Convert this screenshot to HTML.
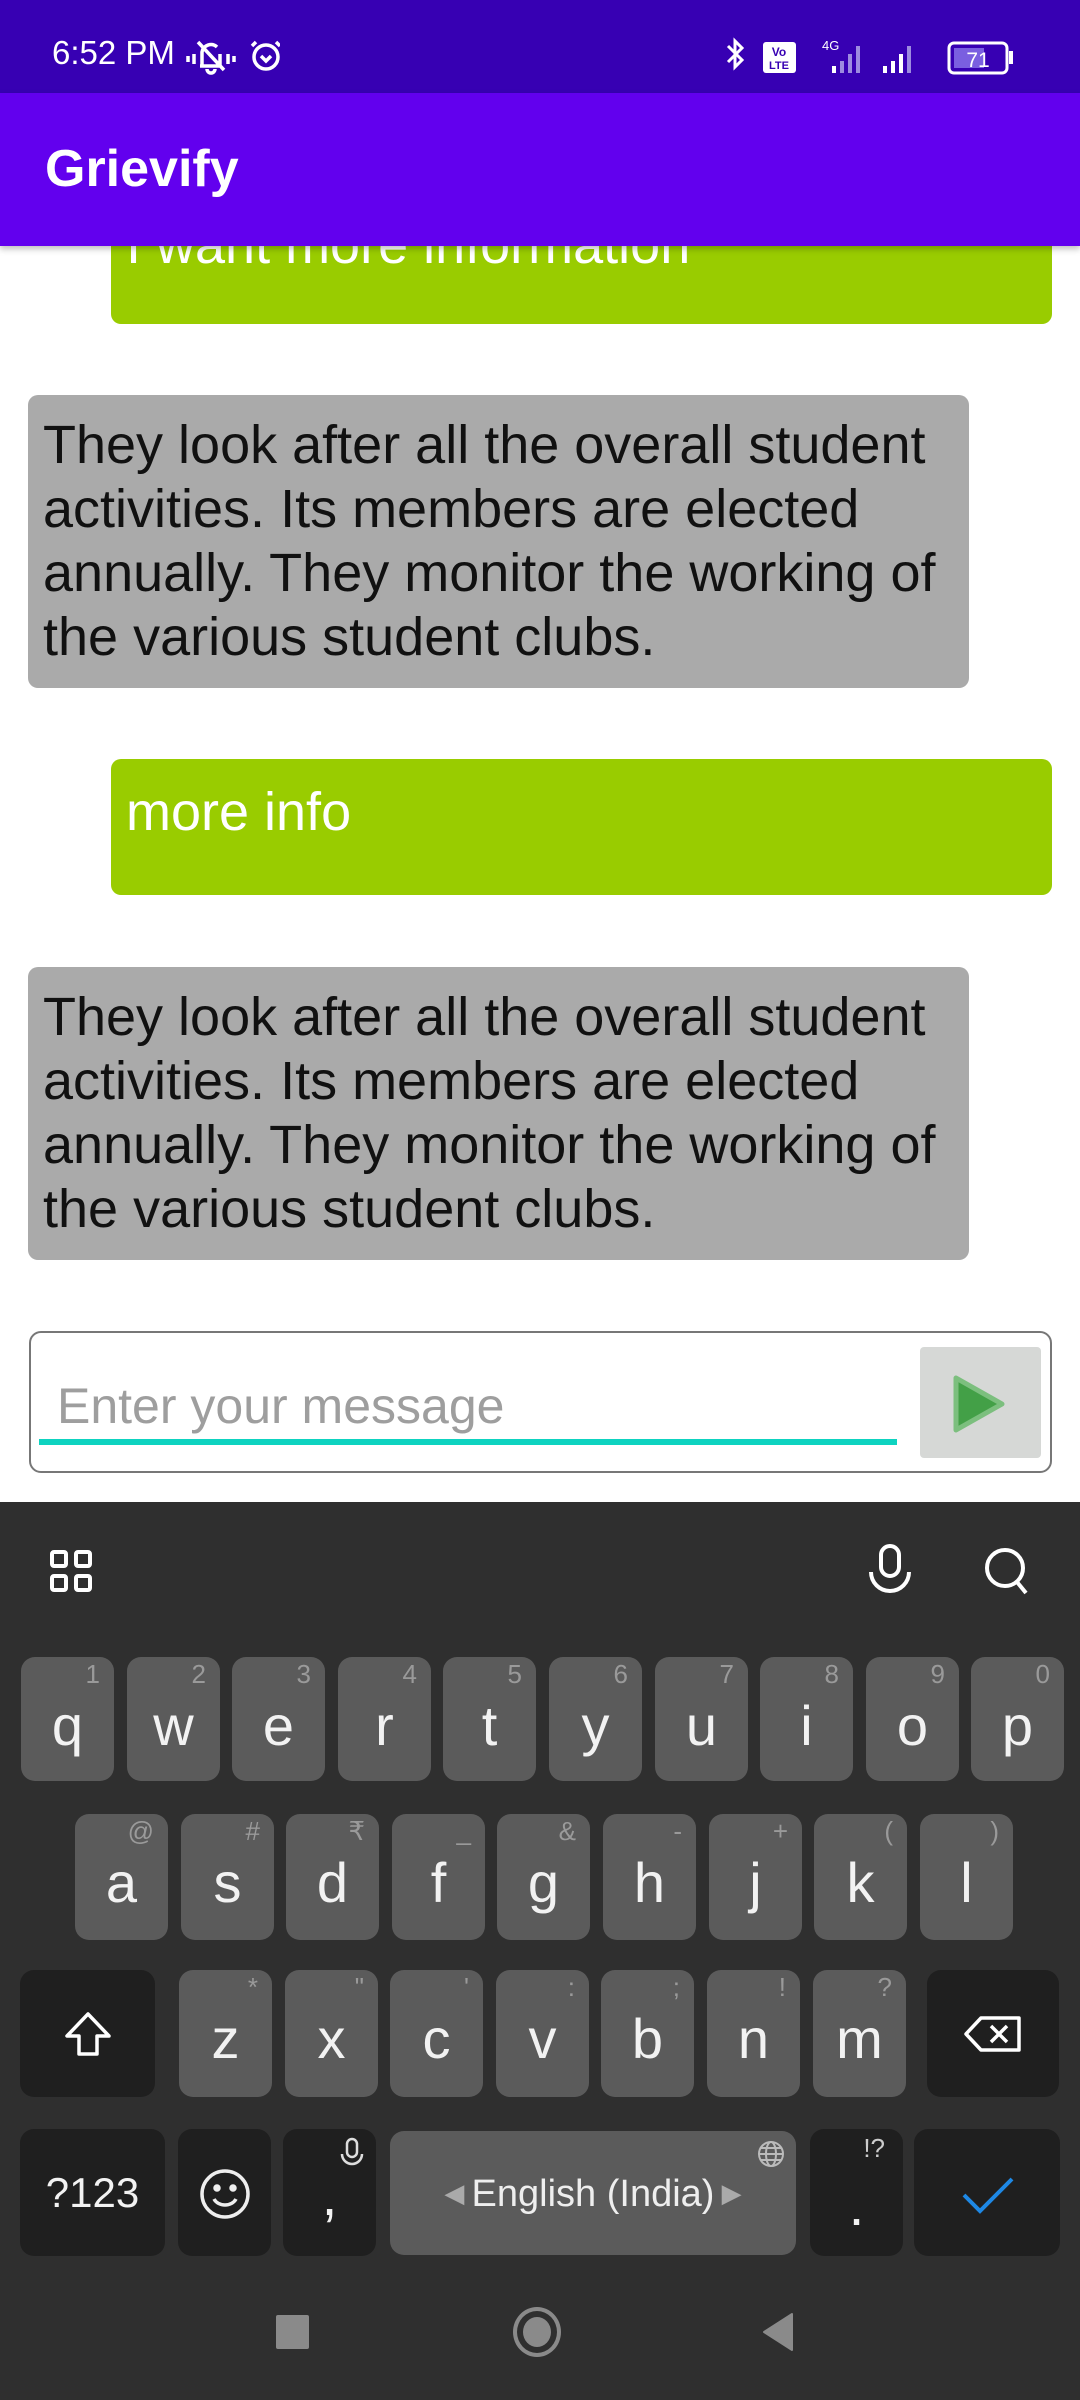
<!DOCTYPE html>
<html><head><meta charset="utf-8"><style>
*{margin:0;padding:0;box-sizing:border-box}
body{width:1080px;height:2400px;position:relative;overflow:hidden;background:#fff;font-family:"Liberation Sans",sans-serif}
.a{position:absolute}
.sb{left:0;top:0;width:1080px;height:93px;background:#3700B3;z-index:5}
.ab{left:0;top:93px;width:1080px;height:153px;background:#6200EE;z-index:5;box-shadow:0 3px 6px rgba(0,0,0,.25)}
.g{background:#99CC00;border-radius:10px;color:#fff;font-size:54px}
.gr{background:#AAAAAA;border-radius:10px;color:#111;font-size:54px;line-height:64px;padding:18px 0 0 15px;white-space:nowrap}
.kb{left:0;top:1502px;width:1080px;height:898px;background:#2F2F2F}
.k{position:absolute;background:#5B5B5B;border-radius:14px;color:#f2f2f2;font-size:56px;text-align:center}
.k span{position:absolute;left:0;right:0;top:36px}
.k i{position:absolute;right:14px;top:2px;font-style:normal;font-size:26px;color:#9a9a9a}
.d{background:#1F1F1F}
</style></head><body>
<div class="a sb">
<div class="a" style="left:52px;top:34px;color:#fff;font-size:33px">6:52 PM</div>
<svg class="a" style="left:184px;top:36px" width="96" height="40" viewBox="0 0 96 40" fill="none" stroke="#fff" stroke-width="3.5"><path d="M10 18v10M4 20v6M44 18v10M50 20v6"/><path d="M18 30V16a9 9 0 0 1 15-5M36 18v12H16M14 6l26 28"/><path d="M23 33a4 4 0 0 0 8 0"/><circle cx="82" cy="21" r="12"/><path d="M72 6l-4 4M92 6l4 4M77 20l5 5 5-5"/></svg>
<svg class="a" style="left:722px;top:36px" width="300" height="40" viewBox="0 0 300 40"><path d="M6 10l14 14-7 7V5l7 7-14 14" fill="none" stroke="#fff" stroke-width="3"/><rect x="41" y="6" width="33" height="31" rx="3" fill="#fff"/><text x="57" y="20" font-size="12" text-anchor="middle" fill="#3700B3" font-weight="bold" font-family="Liberation Sans">Vo</text><text x="57" y="33" font-size="11" text-anchor="middle" fill="#3700B3" font-weight="bold" font-family="Liberation Sans">LTE</text><text x="100" y="14" font-size="13" fill="#fff" font-family="Liberation Sans">4G</text><rect x="110" y="30" width="4" height="7" fill="#fff"/><rect x="118" y="25" width="4" height="12" fill="#9d8be0"/><rect x="126" y="18" width="4" height="19" fill="#9d8be0"/><rect x="134" y="10" width="4" height="27" fill="#9d8be0"/><rect x="161" y="30" width="4" height="7" fill="#fff"/><rect x="169" y="25" width="4" height="12" fill="#fff"/><rect x="177" y="18" width="4" height="19" fill="#fff"/><rect x="185" y="10" width="4" height="27" fill="#9d8be0"/><rect x="227" y="7" width="58" height="30" rx="5" fill="none" stroke="#fff" stroke-width="3"/><rect x="232" y="12" width="30" height="20" fill="#7a5fe0"/><rect x="287" y="15" width="4" height="13" fill="#fff"/><text x="256" y="31" font-size="21" text-anchor="middle" fill="#fff" font-family="Liberation Sans">71</text></svg>
</div>
<div class="a ab"><div class="a" style="left:45px;top:46px;color:#fff;font-size:52px;font-weight:bold">Grievify</div></div>

<div class="a g" style="left:111px;top:170px;width:941px;height:154px"><div class="a" style="left:15px;top:44px">I want more information</div></div>
<div class="a gr" style="left:28px;top:395px;width:941px;height:293px">They look after all the overall student<br>activities. Its members are elected<br>annually. They monitor the working of<br>the various student clubs.</div>
<div class="a g" style="left:111px;top:759px;width:941px;height:136px"><div class="a" style="left:15px;top:22px">more info</div></div>
<div class="a gr" style="left:28px;top:967px;width:941px;height:293px">They look after all the overall student<br>activities. Its members are elected<br>annually. They monitor the working of<br>the various student clubs.</div>

<div class="a" style="left:29px;top:1331px;width:1023px;height:142px;border:2.5px solid #777;border-radius:12px"></div>
<div class="a" style="left:57px;top:1377px;color:#9E9E9E;font-size:50px">Enter your message</div>
<div class="a" style="left:39px;top:1439px;width:858px;height:6px;background:#0ED3C0"></div>
<div class="a" style="left:920px;top:1347px;width:121px;height:111px;background:#D6D8D6;border-radius:4px"></div>
<svg class="a" style="left:950px;top:1372px" width="60" height="64" viewBox="0 0 60 64"><path d="M6 6L52 32 6 58Z" fill="#43A047" stroke="#7cbf7e" stroke-width="5" stroke-linejoin="round"/></svg>

<div class="a kb"></div>
<svg class="a" style="left:48px;top:1548px" width="48" height="48" viewBox="0 0 48 48" fill="none" stroke="#fff" stroke-width="4"><rect x="4" y="4" width="14" height="14" rx="2"/><rect x="28" y="4" width="14" height="14" rx="2"/><rect x="4" y="28" width="14" height="14" rx="2"/><rect x="28" y="28" width="14" height="14" rx="2"/></svg>
<svg class="a" style="left:866px;top:1542px" width="50" height="56" viewBox="0 0 50 56" fill="none" stroke="#fff" stroke-width="4"><rect x="15" y="4" width="18" height="30" rx="9"/><path d="M5 30a19 19 0 0 0 38 0"/></svg>
<svg class="a" style="left:982px;top:1544px" width="50" height="54" viewBox="0 0 50 54" fill="none" stroke="#fff" stroke-width="4"><circle cx="23" cy="24" r="18"/><path d="M35 38l9 11"/></svg>

<div class="k" style="left:21px;top:1657px;width:93px;height:124px"><i>1</i><span>q</span></div>
<div class="k" style="left:127px;top:1657px;width:93px;height:124px"><i>2</i><span>w</span></div>
<div class="k" style="left:232px;top:1657px;width:93px;height:124px"><i>3</i><span>e</span></div>
<div class="k" style="left:338px;top:1657px;width:93px;height:124px"><i>4</i><span>r</span></div>
<div class="k" style="left:443px;top:1657px;width:93px;height:124px"><i>5</i><span>t</span></div>
<div class="k" style="left:549px;top:1657px;width:93px;height:124px"><i>6</i><span>y</span></div>
<div class="k" style="left:655px;top:1657px;width:93px;height:124px"><i>7</i><span>u</span></div>
<div class="k" style="left:760px;top:1657px;width:93px;height:124px"><i>8</i><span>i</span></div>
<div class="k" style="left:866px;top:1657px;width:93px;height:124px"><i>9</i><span>o</span></div>
<div class="k" style="left:971px;top:1657px;width:93px;height:124px"><i>0</i><span>p</span></div>

<div class="k" style="left:75px;top:1814px;width:93px;height:126px"><i>@</i><span>a</span></div>
<div class="k" style="left:181px;top:1814px;width:93px;height:126px"><i>#</i><span>s</span></div>
<div class="k" style="left:286px;top:1814px;width:93px;height:126px"><i>₹</i><span>d</span></div>
<div class="k" style="left:392px;top:1814px;width:93px;height:126px"><i>_</i><span>f</span></div>
<div class="k" style="left:497px;top:1814px;width:93px;height:126px"><i>&amp;</i><span>g</span></div>
<div class="k" style="left:603px;top:1814px;width:93px;height:126px"><i>-</i><span>h</span></div>
<div class="k" style="left:709px;top:1814px;width:93px;height:126px"><i>+</i><span>j</span></div>
<div class="k" style="left:814px;top:1814px;width:93px;height:126px"><i>(</i><span>k</span></div>
<div class="k" style="left:920px;top:1814px;width:93px;height:126px"><i>)</i><span>l</span></div>

<div class="k d" style="left:20px;top:1970px;width:135px;height:127px"><svg style="position:absolute;left:43px;top:40px" width="50" height="50" viewBox="0 0 50 50" fill="none" stroke="#fff" stroke-width="3.5" stroke-linejoin="round"><path d="M25 4L4 26h12v18h18V26h12Z"/></svg></div>
<div class="k" style="left:179px;top:1970px;width:93px;height:127px"><i>*</i><span>z</span></div>
<div class="k" style="left:285px;top:1970px;width:93px;height:127px"><i>"</i><span>x</span></div>
<div class="k" style="left:390px;top:1970px;width:93px;height:127px"><i>'</i><span>c</span></div>
<div class="k" style="left:496px;top:1970px;width:93px;height:127px"><i>:</i><span>v</span></div>
<div class="k" style="left:601px;top:1970px;width:93px;height:127px"><i>;</i><span>b</span></div>
<div class="k" style="left:707px;top:1970px;width:93px;height:127px"><i>!</i><span>n</span></div>
<div class="k" style="left:813px;top:1970px;width:93px;height:127px"><i>?</i><span>m</span></div>
<div class="k d" style="left:927px;top:1970px;width:132px;height:127px"><svg style="position:absolute;left:36px;top:44px" width="60" height="40" viewBox="0 0 60 40" fill="none" stroke="#fff" stroke-width="3.5" stroke-linejoin="round"><path d="M18 4h38v32H18L3 20Z"/><path d="M28 12l16 16M44 12L28 28"/></svg></div>

<div class="k d" style="left:20px;top:2129px;width:145px;height:127px;font-size:42px"><span style="top:40px">?123</span></div>
<div class="k d" style="left:178px;top:2129px;width:93px;height:127px"><svg style="position:absolute;left:20px;top:38px" width="54" height="54" viewBox="0 0 54 54" fill="none" stroke="#eee" stroke-width="3.5"><circle cx="27" cy="27" r="23"/><circle cx="19" cy="21" r="2" fill="#eee"/><circle cx="35" cy="21" r="2" fill="#eee"/><path d="M16 32a12 10 0 0 0 22 0"/></svg></div>
<div class="k d" style="left:283px;top:2129px;width:93px;height:127px"><svg style="position:absolute;left:56px;top:8px" width="26" height="34" viewBox="0 0 26 34" fill="none" stroke="#ddd" stroke-width="2.5"><rect x="8" y="2" width="10" height="18" rx="5"/><path d="M3 17a10 10 0 0 0 20 0"/></svg><span style="top:34px">,</span></div>
<div class="k" style="left:390px;top:2131px;width:406px;height:124px;font-size:38px"><svg style="position:absolute;right:10px;top:8px" width="30" height="30" viewBox="0 0 30 30" fill="none" stroke="#bbb" stroke-width="2"><circle cx="15" cy="15" r="12"/><ellipse cx="15" cy="15" rx="5" ry="12"/><path d="M3 15h24M5 9h20M5 21h20"/></svg><span style="top:42px;color:#eee"><b style="font-weight:normal;color:#aaa;font-size:26px;vertical-align:4px">◀&nbsp;</b>English (India)<b style="font-weight:normal;color:#aaa;font-size:26px;vertical-align:4px">&nbsp;▶</b></span></div>
<div class="k d" style="left:810px;top:2129px;width:93px;height:127px"><i style="top:4px;right:18px;color:#ccc">!?</i><span style="top:44px">.</span></div>
<div class="k d" style="left:914px;top:2129px;width:146px;height:127px"><svg style="position:absolute;left:46px;top:46px" width="56" height="40" viewBox="0 0 56 40" fill="none" stroke="#1E88E5" stroke-width="4"><path d="M4 20l16 16L52 4"/></svg></div>

<div class="a" style="left:276px;top:2315px;width:33px;height:34px;background:#8a8a8a;border-radius:2px"></div>
<div class="a" style="left:513px;top:2307px;width:48px;height:50px;border:4px solid #8a8a8a;border-radius:50%"></div>
<div class="a" style="left:523px;top:2317px;width:28px;height:30px;background:#8a8a8a;border-radius:50%"></div>
<svg class="a" style="left:760px;top:2312px" width="36" height="40" viewBox="0 0 36 40"><path d="M32 2v36L4 20Z" fill="#8a8a8a" stroke="#8a8a8a" stroke-width="2" stroke-linejoin="round"/></svg>
</body></html>
